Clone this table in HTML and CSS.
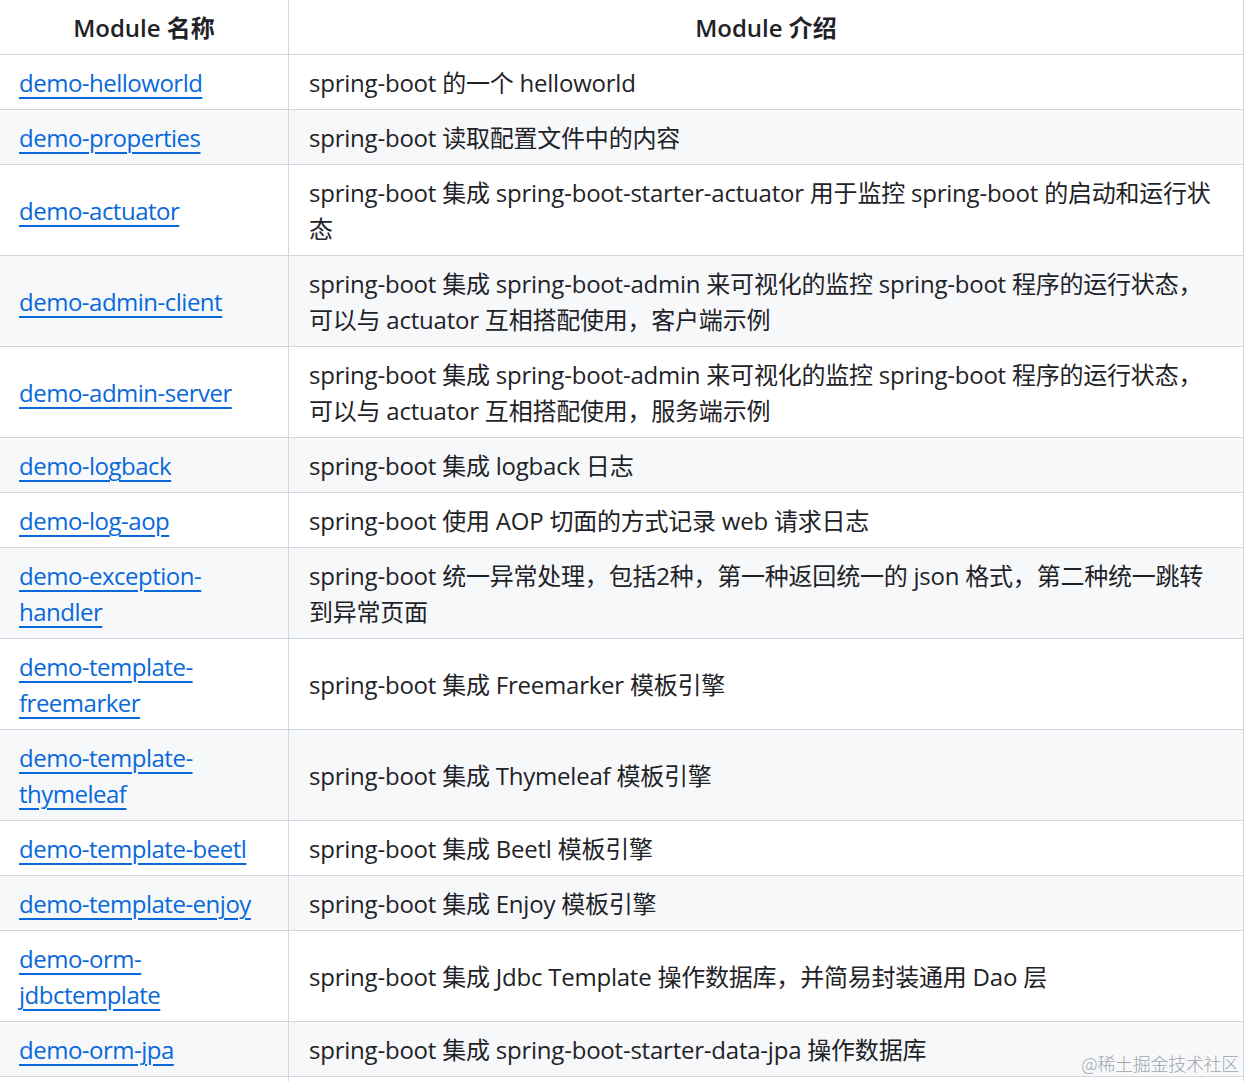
FILE: index.html
```html
<!DOCTYPE html>
<html lang="zh-CN">
<head>
<meta charset="utf-8">
<title>Modules</title>
<link rel="stylesheet" href="styles.css">
</head>
<body>
<div class="page">
<table class="modules">
  <colgroup><col class="c-name"><col class="c-desc"></colgroup>
  <thead>
    <tr><th>Module 名称</th><th>Module 介绍</th></tr>
  </thead>
  <tbody>
    <tr><td><a href="#">demo-helloworld</a></td><td>spring-boot 的一个 helloworld</td></tr>
    <tr><td><a href="#">demo-properties</a></td><td>spring-boot 读取配置文件中的内容</td></tr>
    <tr><td><a href="#">demo-actuator</a></td><td>spring-boot 集成 spring-boot-starter-actuator 用于监控 spring-boot 的启动和运行状态</td></tr>
    <tr><td><a href="#">demo-admin-client</a></td><td>spring-boot 集成 spring-boot-admin 来可视化的监控 spring-boot 程序的运行状态，可以与 actuator 互相搭配使用，客户端示例</td></tr>
    <tr><td><a href="#">demo-admin-server</a></td><td>spring-boot 集成 spring-boot-admin 来可视化的监控 spring-boot 程序的运行状态，可以与 actuator 互相搭配使用，服务端示例</td></tr>
    <tr><td><a href="#">demo-logback</a></td><td>spring-boot 集成 logback 日志</td></tr>
    <tr><td><a href="#">demo-log-aop</a></td><td>spring-boot 使用 AOP 切面的方式记录 web 请求日志</td></tr>
    <tr><td><a href="#">demo-exception-handler</a></td><td>spring-boot 统一异常处理，包括2种，第一种返回统一的 json 格式，第二种统一跳转到异常页面</td></tr>
    <tr><td><a href="#">demo-template-freemarker</a></td><td>spring-boot 集成 Freemarker 模板引擎</td></tr>
    <tr><td><a href="#">demo-template-thymeleaf</a></td><td>spring-boot 集成 Thymeleaf 模板引擎</td></tr>
    <tr><td><a href="#">demo-template-beetl</a></td><td>spring-boot 集成 Beetl 模板引擎</td></tr>
    <tr><td><a href="#">demo-template-enjoy</a></td><td>spring-boot 集成 Enjoy 模板引擎</td></tr>
    <tr><td><a href="#">demo-orm-jdbctemplate</a></td><td>spring-boot 集成 Jdbc Template 操作数据库，并简易封装通用 Dao 层</td></tr>
    <tr><td><a href="#">demo-orm-jpa</a></td><td>spring-boot 集成 spring-boot-starter-data-jpa 操作数据库</td></tr>
    <tr class="tail"><td></td><td></td></tr>
  </tbody>
</table>
<div class="watermark">@稀土掘金技术社区</div>
</div>
</body>
</html>
```

FILE: styles.css
```css
html, body {
  margin: 0;
  padding: 0;
  background: #ffffff;
  overflow: hidden;
}

.page {
  position: relative;
  width: 1245px;
  height: 1081px;
  overflow: hidden;
}

.modules {
  border-collapse: collapse;
  table-layout: fixed;
  width: 1245px;
  margin: -1px 0 0 -1px;
  font-family: "Open Sans", "Noto Sans CJK SC", sans-serif;
  font-size: 24px;
  line-height: 36px;
  color: #1f2328;
}

.c-name { width: 289px; }

.modules th,
.modules td {
  border: 1px solid #d0d7de;
  padding: 10px 19px 8px 19px;
  vertical-align: middle;
  text-align: left;
}

.modules td {
  letter-spacing: -0.22px;
}

.modules th {
  font-weight: 600;
  text-align: center;
}

.modules td:nth-child(2) {
  padding-left: 20px;
  padding-right: 20px;
}

.modules tbody tr:nth-child(odd) {
  background: #ffffff;
}

.modules tbody tr:nth-child(even) {
  background: #f6f8fa;
}

.modules tbody tr.tail td {
  height: 36px;
  background: #ffffff;
}

.modules a {
  color: #0969da;
  letter-spacing: -0.5px;
  text-decoration: underline;
  text-decoration-thickness: 2px;
  text-underline-offset: 5px;
}

.watermark {
  position: absolute;
  right: 6px;
  bottom: 7px;
  font-family: "Noto Sans CJK SC", sans-serif;
  font-size: 18px;
  line-height: 22px;
  color: #a3a7ad;
  font-weight: 300;
  letter-spacing: -0.3px;
}
```
